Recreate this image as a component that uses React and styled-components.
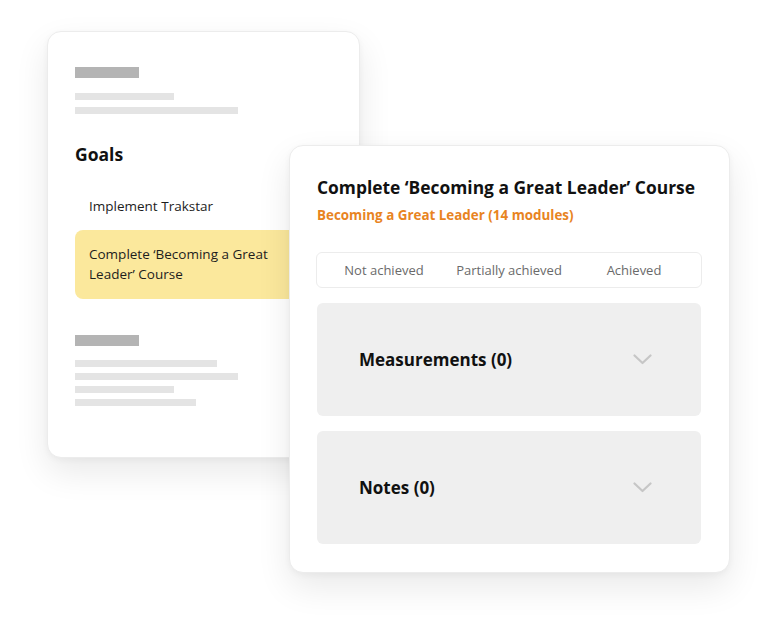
import React from "react";
import styled, { createGlobalStyle } from "styled-components";

const Global = createGlobalStyle`
  html, body { margin: 0; padding: 0; background: #ffffff; }
  body { font-family: "Open Sans", sans-serif; }
  * { box-sizing: border-box; }
`;

const FONT = `"Open Sans", "Noto Sans", sans-serif`;

const Stage = styled.div`
  position: relative;
  width: 777px;
  height: 634px;
  overflow: hidden;
  background: #fff;
`;

const Card = styled.div`
  position: absolute;
  left: ${(p) => p.$x}px;
  top: ${(p) => p.$y}px;
  width: ${(p) => p.$w}px;
  height: ${(p) => p.$h}px;
  background: #fff;
  border: 1px solid #ececec;
  border-radius: 14px;
  box-shadow: 0 14px 34px rgba(0, 0, 0, 0.09), 0 2px 6px rgba(0, 0, 0, 0.04);
  overflow: hidden;
`;

const LeftInner = styled.div`
  display: flex;
  flex-direction: column;
  padding: 35px 0 0 27px;
`;

const Bar = styled.div`
  height: ${(p) => (p.$dark ? 11 : 7)}px;
  width: ${(p) => p.$w}px;
  background: ${(p) => (p.$dark ? "#b4b4b4" : "#e4e4e4")};
  margin-top: ${(p) => p.$mt || 0}px;
`;

const Heading = styled.div`
  font-family: ${FONT};
  font-weight: 700;
  font-size: 17.5px;
  line-height: 22px;
  color: #111;
  margin-top: 29px;
`;

const GoalItem = styled.div`
  font-family: ${FONT};
  font-size: 13.5px;
  line-height: 20px;
  color: #1d1d1d;
  padding: ${(p) => (p.$active ? "14px 14px 15px" : "0 14px")};
  margin-top: ${(p) => p.$mt}px;
  background: ${(p) => (p.$active ? "#fbe89c" : "transparent")};
  border-radius: 8px 0 0 8px;
  width: 290px;
`;

const RightInner = styled.div`
  display: flex;
  flex-direction: column;
  padding: 30px 27px 0 26px;
`;

const Title = styled.div`
  font-family: ${FONT};
  font-weight: 700;
  font-size: 17.4px;
  line-height: 22px;
  color: #111;
  padding-left: 1px;
  white-space: nowrap;
`;

const Subtitle = styled.div`
  font-family: ${FONT};
  font-weight: 700;
  font-size: 13.4px;
  line-height: 18px;
  color: #e8841f;
  margin-top: 8px;
  padding-left: 1px;
`;

const Tabs = styled.div`
  margin-top: 28px;
  height: 36px;
  border: 1px solid #ececec;
  border-radius: 6px;
  display: grid;
  grid-template-columns: repeat(3, 1fr);
  align-items: center;
`;

const Tab = styled.div`
  font-family: ${FONT};
  font-size: 13px;
  color: #6a6a6a;
  text-align: center;
  padding-left: ${(p) => p.$pl || 0}px;
  padding-right: ${(p) => p.$pr || 0}px;
`;

const Panel = styled.div`
  margin: ${(p) => p.$mt}px 1px 0;
  height: 113px;
  background: #efefef;
  border-radius: 6px;
  display: flex;
  align-items: center;
  justify-content: space-between;
  padding: 0 49px 0 42px;
`;

const PanelTitle = styled.div`
  font-family: ${FONT};
  font-weight: 700;
  font-size: 17px;
  color: #111;
`;

const Chevron = () => (
  <svg width="19" height="11" viewBox="0 0 19 11" fill="none">
    <path d="M1.5 1.5 L9.5 9 L17.5 1.5" stroke="#c6c6c6" strokeWidth="2.2" strokeLinecap="round" strokeLinejoin="round" />
  </svg>
);

export default function App() {
  return (
    <Stage>
      <Global />
      <Card $x={47} $y={31} $w={313} $h={427}>
        <LeftInner>
          <Bar $dark $w={64} />
          <Bar $w={99} $mt={15} />
          <Bar $w={163} $mt={7} />
          <Heading>Goals</Heading>
          <GoalItem $mt={31}>Implement Trakstar</GoalItem>
          <GoalItem $active $mt={14}>
            Complete ‘Becoming a Great
            <br />
            Leader’ Course
          </GoalItem>
          <Bar $dark $w={64} $mt={36} />
          <Bar $w={142} $mt={14} />
          <Bar $w={163} $mt={6} />
          <Bar $w={99} $mt={6} />
          <Bar $w={121} $mt={6} />
        </LeftInner>
      </Card>
      <Card $x={289} $y={145} $w={441} $h={428}>
        <RightInner>
          <Title>Complete ‘Becoming a Great Leader’ Course</Title>
          <Subtitle>Becoming a Great Leader (14 modules)</Subtitle>
          <Tabs>
            <Tab $pl={6}>Not achieved</Tab>
            <Tab>Partially achieved</Tab>
            <Tab $pr={6}>Achieved</Tab>
          </Tabs>
          <Panel $mt={15}>
            <PanelTitle>Measurements (0)</PanelTitle>
            <Chevron />
          </Panel>
          <Panel $mt={15}>
            <PanelTitle>Notes (0)</PanelTitle>
            <Chevron />
          </Panel>
        </RightInner>
      </Card>
    </Stage>
  );
}
